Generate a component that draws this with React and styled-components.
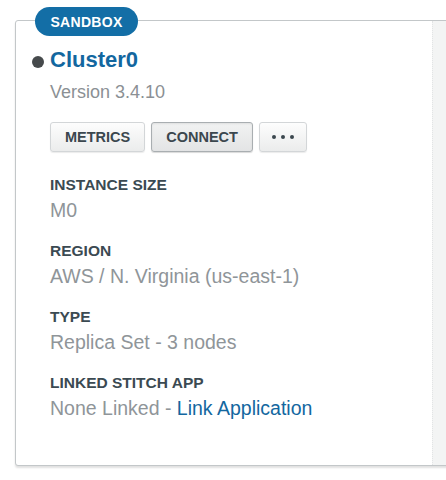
import React from "react";
import styled, { createGlobalStyle, css } from "styled-components";

const Global = createGlobalStyle`
  html, body { margin: 0; padding: 0; background: #fff; }
  body { font-family: "Liberation Sans", Arial, Helvetica, sans-serif; overflow: hidden; }
`;

const Page = styled.div`
  width: 446px;
  height: 480px;
  overflow: hidden;
  padding: 20px 0 0 15px;
  box-sizing: border-box;
`;

const Card = styled.div`
  position: relative;
  width: 470px;
  height: 446px;
  box-sizing: border-box;
  border: 1px solid #c3c7c9;
  border-radius: 3px;
  box-shadow: 0 2px 2px rgba(0, 0, 0, 0.12);
  display: flex;
  background: #fff;
`;

const Badge = styled.div`
  position: absolute;
  top: -14px;
  left: 19px;
  height: 29px;
  width: 103px;
  box-sizing: border-box;
  border-radius: 15px;
  background: #136ea6;
  color: #fff;
  font-weight: 700;
  font-size: 14px;
  letter-spacing: 0.3px;
  display: flex;
  align-items: center;
  justify-content: center;
`;

const Main = styled.div`
  width: 416px;
  flex: none;
  padding: 26px 0 0 34px;
  box-sizing: border-box;
`;

const Side = styled.div`
  flex: 1;
  background: #f3f4f4;
  border-left: 1px dotted #e2e4e5;
  border-radius: 0 3px 3px 0;
`;

const Heading = styled.div`
  display: flex;
  align-items: center;
  gap: 6px;
  margin-left: -18px;
  height: 26px;
`;

const Dot = styled.span`
  width: 12px;
  height: 12px;
  border-radius: 50%;
  background: #464a4c;
  flex: none;
  margin-top: 3px;
`;

const Title = styled.a`
  font-size: 22px;
  line-height: 26px;
  font-weight: 700;
  color: #13679f;
  text-decoration: none;
`;

const Version = styled.div`
  margin-top: 8px;
  font-size: 18px;
  line-height: 22px;
  color: #8b9094;
`;

const Buttons = styled.div`
  display: flex;
  gap: 6px;
  margin-top: 19px;
`;

const Button = styled.button`
  height: 30px;
  padding: 0 ${(p) => (p.$icon ? "10px" : "14px")};
  min-width: ${(p) => (p.$icon ? "48px" : "0")};
  box-sizing: border-box;
  border: 1px solid #d3d6d8;
  border-radius: 3px;
  background: linear-gradient(#fdfdfd, #ebecec);
  box-shadow: 0 1px 1px rgba(0, 0, 0, 0.08);
  font-family: "Liberation Sans", Arial, sans-serif;
  font-size: 14.5px;
  font-weight: 700;
  color: #3b474e;
  display: flex;
  align-items: center;
  justify-content: center;
  ${(p) =>
    p.$active &&
    css`
      border-color: #a9aeb1;
      background: linear-gradient(#f1f2f2, #e3e4e5);
      box-shadow: inset 0 1px 2px rgba(0, 0, 0, 0.08), 0 1px 1px rgba(0, 0, 0, 0.15);
    `}
`;

const Dots = styled.span`
  display: flex;
  gap: 5px;
`;

const DotSmall = styled.span`
  width: 4px;
  height: 4px;
  border-radius: 50%;
  background: #3b474e;
`;

const Fields = styled.dl`
  margin: 24px 0 0 0;
`;

const Label = styled.dt`
  font-size: 15.5px;
  line-height: 18px;
  font-weight: 700;
  color: #3b4a52;
`;

const Value = styled.dd`
  margin: 5px 0 21px 0;
  font-size: 19.5px;
  line-height: 22px;
  color: #8f9599;
`;

const Link = styled.a`
  color: #13679f;
  text-decoration: none;
`;

const fields = [
  ["INSTANCE SIZE", "M0"],
  ["REGION", "AWS / N. Virginia (us-east-1)"],
  ["TYPE", "Replica Set - 3 nodes"],
];

export default function App() {
  return (
    <>
      <Global />
      <Page>
        <Card>
          <Badge>SANDBOX</Badge>
          <Main>
            <Heading>
              <Dot />
              <Title href="#">Cluster0</Title>
            </Heading>
            <Version>Version 3.4.10</Version>
            <Buttons>
              <Button>METRICS</Button>
              <Button $active>CONNECT</Button>
              <Button $icon aria-label="More">
                <Dots>
                  <DotSmall />
                  <DotSmall />
                  <DotSmall />
                </Dots>
              </Button>
            </Buttons>
            <Fields>
              {fields.map(([l, v]) => (
                <React.Fragment key={l}>
                  <Label>{l}</Label>
                  <Value>{v}</Value>
                </React.Fragment>
              ))}
              <Label>LINKED STITCH APP</Label>
              <Value>
                None Linked - <Link href="#">Link Application</Link>
              </Value>
            </Fields>
          </Main>
          <Side />
        </Card>
      </Page>
    </>
  );
}
